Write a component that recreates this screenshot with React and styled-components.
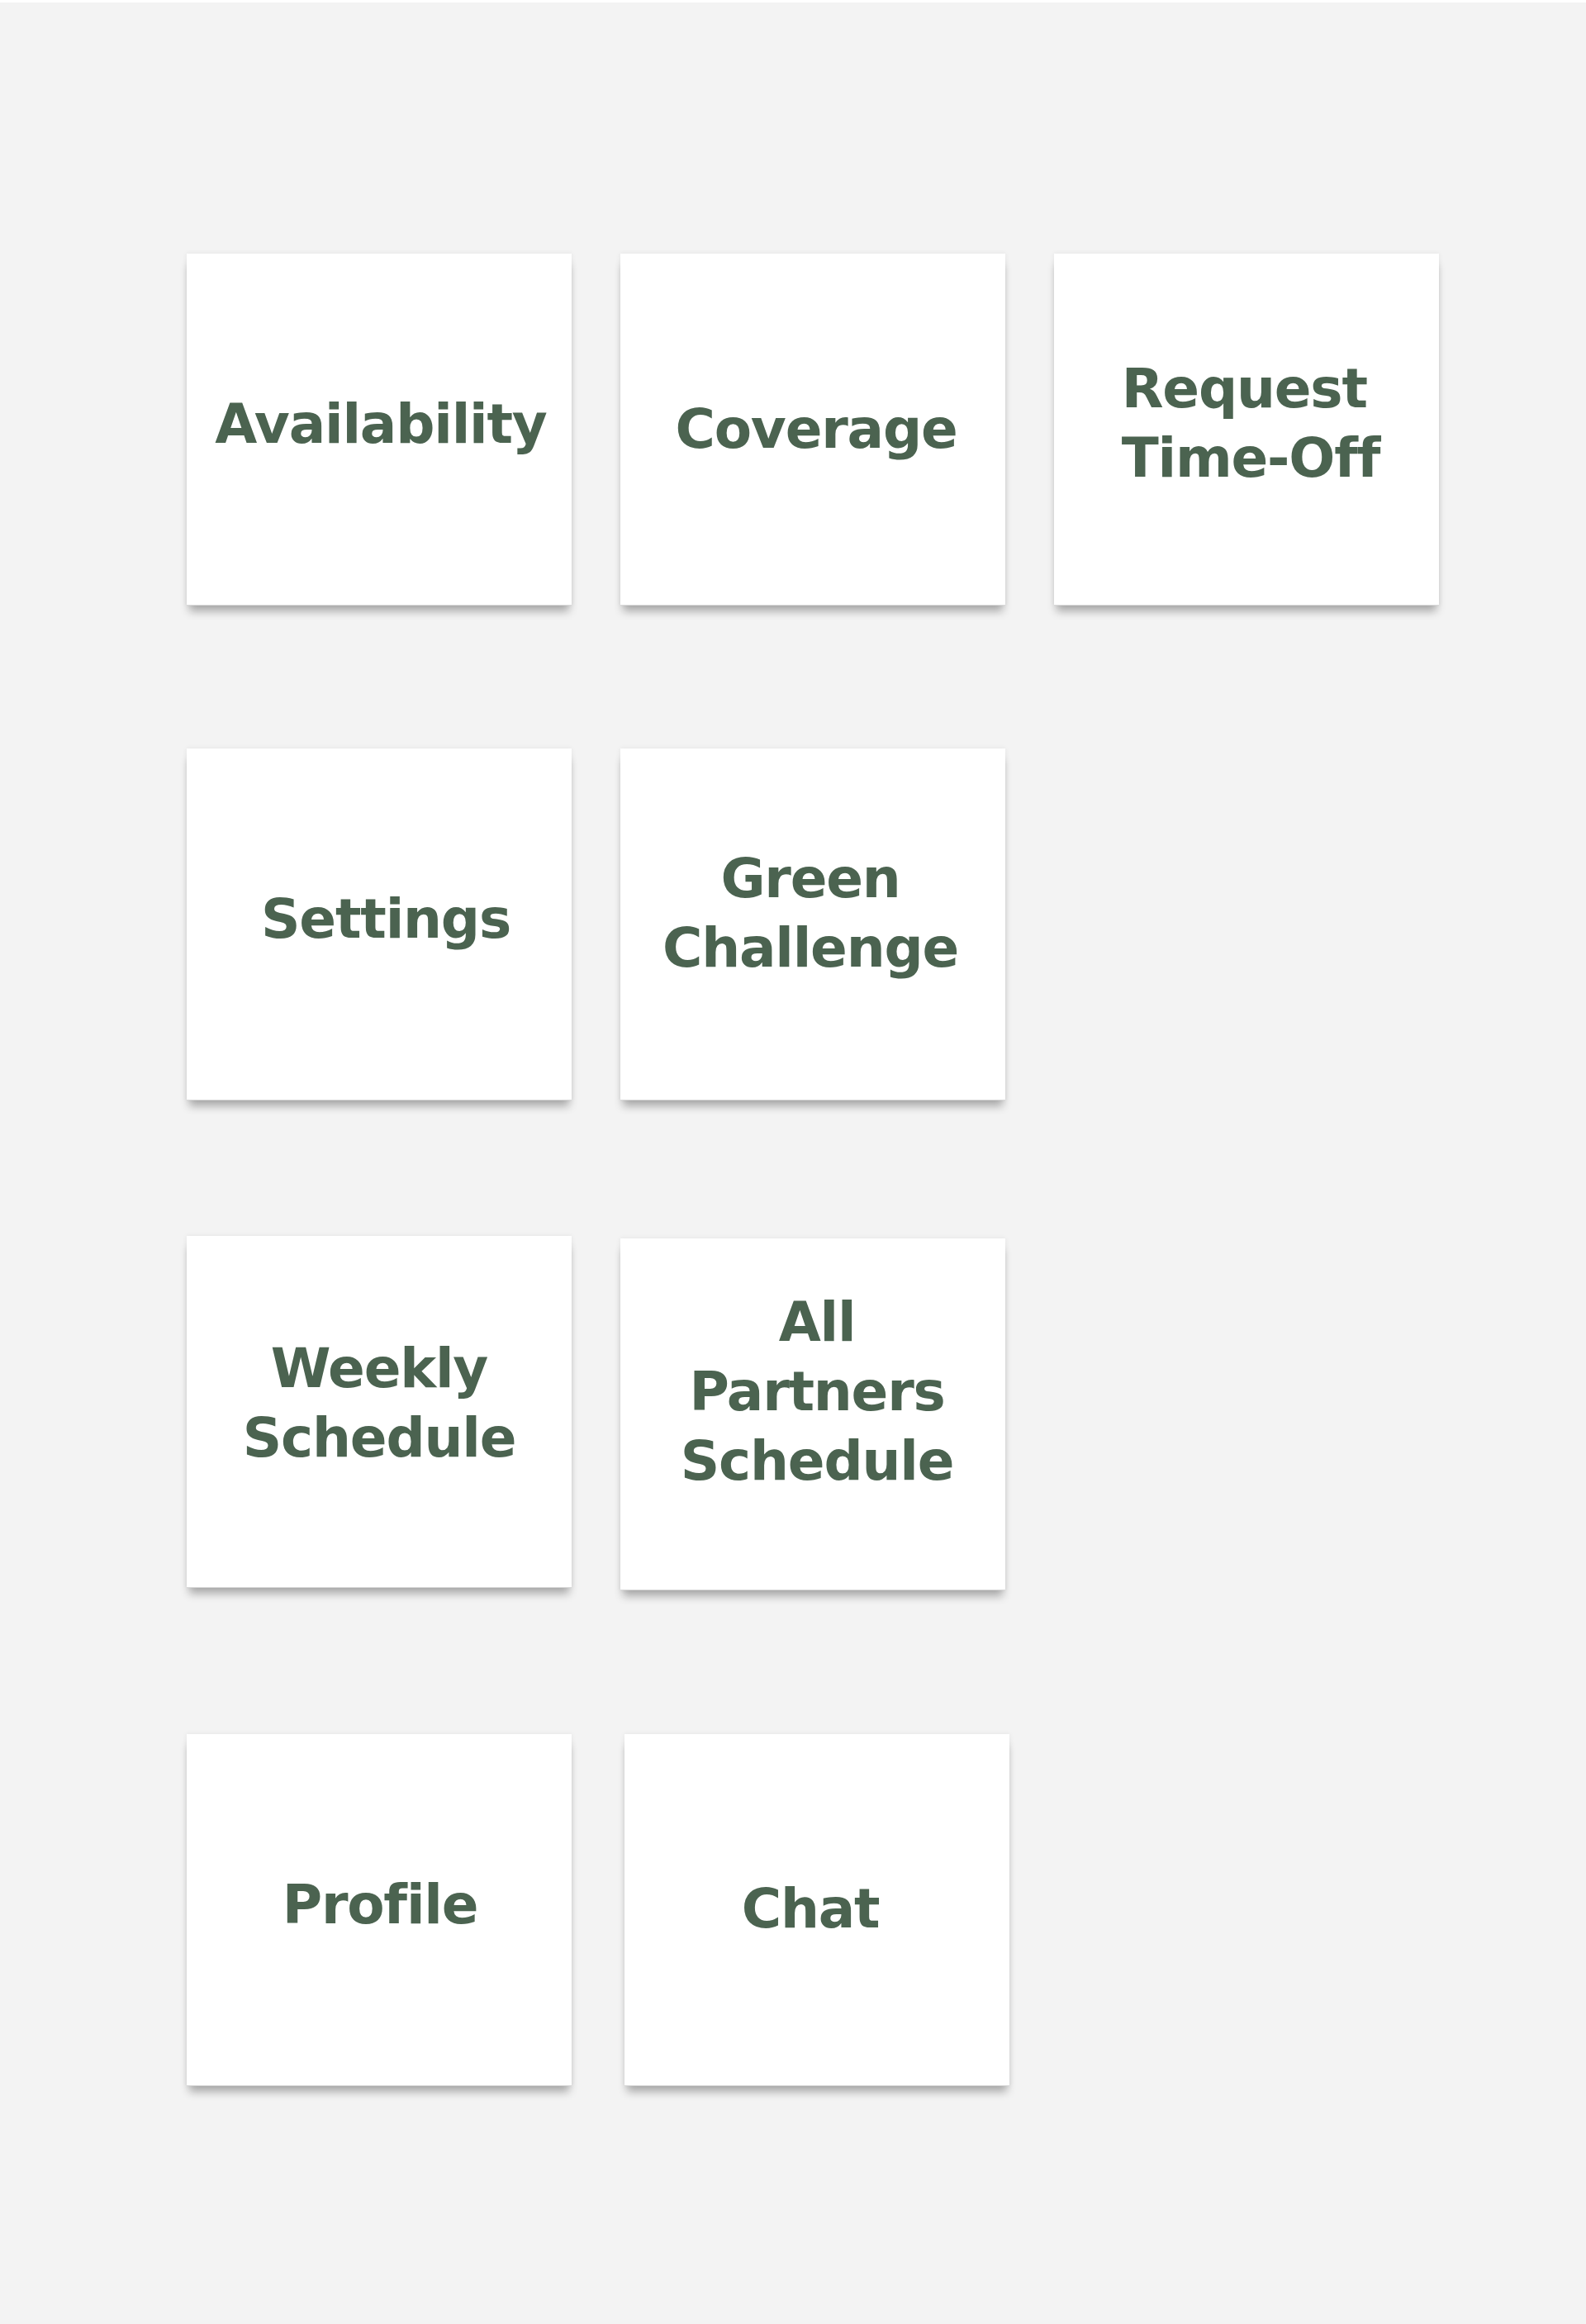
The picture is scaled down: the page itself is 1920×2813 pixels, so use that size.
import React from 'react';
import styled, { createGlobalStyle } from 'styled-components';

const GlobalStyle = createGlobalStyle`
  html, body {
    margin: 0;
    padding: 0;
    background: #f3f3f3;
  }
`;

const Page = styled.div`
  min-height: 2810px;
  background: #f3f3f3;
  border-top: 3px solid #ffffff;
  padding: 304px 0 0 226px;
  box-sizing: border-box;
`;

const Grid = styled.div`
  display: flex;
  flex-direction: column;
`;

const Row = styled.div`
  display: flex;
  align-items: flex-start;
  gap: 59px;
  margin-top: ${props => props.$top || 0}px;
`;

const Card = styled.button`
  width: 466px;
  height: 425px;
  flex: none;
  background: #ffffff;
  border: none;
  padding: 0;
  margin: ${props => props.$offsetY || 0}px 0 0 ${props => props.$offsetX || 0}px;
  display: flex;
  align-items: center;
  justify-content: center;
  cursor: pointer;
  box-shadow:
    0 1px 0 #d8d8d8,
    0 11px 10px -3px rgba(0, 0, 0, 0.3),
    0 0 6px rgba(0, 0, 0, 0.07);
`;

const Label = styled.span`
  font-family: "DejaVu Sans", "Liberation Sans", sans-serif;
  font-weight: 700;
  font-size: 66px;
  line-height: 84px;
  letter-spacing: -1.2px;
  color: #4b6350;
  text-align: ${props => props.$align || 'center'};
  transform: translate(${props => props.$dx || 0}px, ${props => -(props.$lift || 0)}px);
`;

const rows = [
  {
    top: 0,
    cards: [
      { lines: ['Availability'], dx: 2, lift: 6 },
      { lines: ['Coverage'], dx: 4, lift: 0 },
      { lines: ['Request', 'Time-Off'], align: 'left', dx: 5, lift: 7 },
    ],
  },
  {
    top: 174,
    cards: [
      { lines: ['Settings'], dx: 8, lift: 6 },
      { lines: ['Green', 'Challenge'], dx: -3, lift: 13 },
    ],
  },
  {
    top: 165,
    cards: [
      { lines: ['Weekly', 'Schedule'], dx: 0, lift: 10 },
      { lines: ['All', 'Partners', 'Schedule'], dx: 5, lift: 27, offsetY: 3 },
    ],
  },
  {
    top: 175,
    cards: [
      { lines: ['Profile'], dx: 1, lift: 6 },
      { lines: ['Chat'], dx: -8, lift: 1, offsetX: 5 },
    ],
  },
];

const App = () => {
  return (
    <>
      <GlobalStyle />
      <Page>
        <Grid>
          {rows.map((row, i) => (
            <Row key={i} $top={row.top}>
              {row.cards.map(card => (
                <Card
                  key={card.lines.join(' ')}
                  $offsetX={card.offsetX}
                  $offsetY={card.offsetY}
                >
                  <Label $align={card.align} $dx={card.dx} $lift={card.lift}>
                    {card.lines.map((line, j) => (
                      <React.Fragment key={j}>
                        {j > 0 && <br />}
                        {line}
                      </React.Fragment>
                    ))}
                  </Label>
                </Card>
              ))}
            </Row>
          ))}
        </Grid>
      </Page>
    </>
  );
};

export default App;
